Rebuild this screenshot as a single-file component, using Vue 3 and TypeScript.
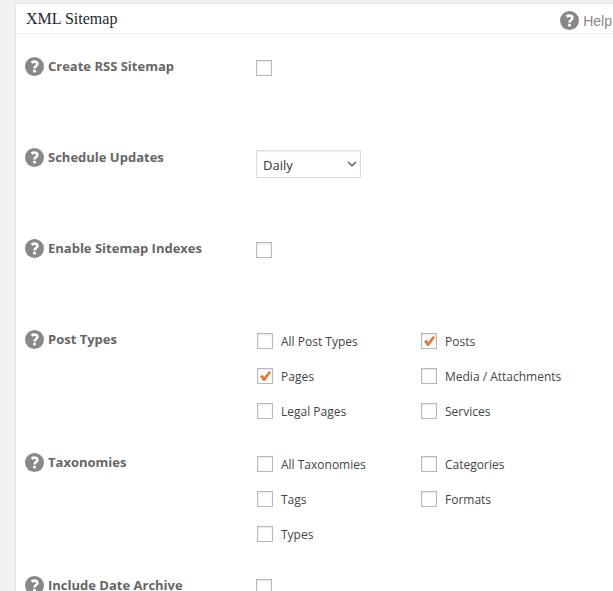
<script setup lang="ts">
import { ref } from 'vue'

interface Option {
  id: string
  label: string
  checked: boolean
}

interface Setting {
  id: string
  label: string
  kind: 'toggle' | 'select' | 'group'
  checked?: boolean
  value?: string
  choices?: string[]
  options?: Option[]
}

const option = (id: string, label: string, checked = false): Option => ({ id, label, checked })

const settings = ref<Setting[]>([
  { id: 'rss', label: 'Create RSS Sitemap', kind: 'toggle', checked: false },
  { id: 'schedule', label: 'Schedule Updates', kind: 'select', value: 'Daily', choices: ['Daily'] },
  { id: 'indexes', label: 'Enable Sitemap Indexes', kind: 'toggle', checked: false },
  {
    id: 'post-types',
    label: 'Post Types',
    kind: 'group',
    options: [
      option('pt-all', 'All Post Types'),
      option('pt-posts', 'Posts', true),
      option('pt-pages', 'Pages', true),
      option('pt-media', 'Media / Attachments'),
      option('pt-legal', 'Legal Pages'),
      option('pt-services', 'Services'),
    ],
  },
  {
    id: 'taxonomies',
    label: 'Taxonomies',
    kind: 'group',
    options: [
      option('tx-all', 'All Taxonomies'),
      option('tx-categories', 'Categories'),
      option('tx-tags', 'Tags'),
      option('tx-formats', 'Formats'),
      option('tx-types', 'Types'),
    ],
  },
  { id: 'date-archive', label: 'Include Date Archive', kind: 'toggle', checked: false },
])
</script>

<template>
  <main class="page">
    <section class="panel">
      <header class="panel-head">
        <h2 class="title">XML Sitemap</h2>
        <a class="help" href="#help">
          <svg class="mark" viewBox="0 0 19 19" aria-hidden="true">
            <circle cx="9.5" cy="9.5" r="9.5" />
            <path d="M6.5 5.6C8.2 4.4 12.4 3.9 12.4 6.9C12.4 9 9.5 9 9.5 11.4" />
            <rect x="8" y="12.7" width="3" height="2.7" rx="1" />
          </svg>
          <span>Help</span>
        </a>
      </header>

      <form class="settings" @submit.prevent>
        <div v-for="item in settings" :key="item.id" class="row">
          <div class="name">
            <button type="button" class="tip" :aria-describedby="`${item.id}-label`">
              <svg class="mark" viewBox="0 0 19 19" aria-hidden="true">
                <circle cx="9.5" cy="9.5" r="9.5" />
                <path d="M6.5 5.6C8.2 4.4 12.4 3.9 12.4 6.9C12.4 9 9.5 9 9.5 11.4" />
                <rect x="8" y="12.7" width="3" height="2.7" rx="1" />
              </svg>
            </button>
            <span v-if="item.kind === 'group'" :id="`${item.id}-label`" class="label">{{ item.label }}</span>
            <label v-else :id="`${item.id}-label`" class="label" :for="item.id">{{ item.label }}</label>
          </div>

          <div v-if="item.kind === 'toggle'" class="field">
            <span class="box">
              <input :id="item.id" v-model="item.checked" type="checkbox" />
              <svg v-if="item.checked" class="tick" viewBox="0 0 16 16" aria-hidden="true">
                <path d="M3 8.4L5.4 6.8L7.2 9L12 3L14.2 4.2L7.8 13H6.4Z" />
              </svg>
            </span>
          </div>

          <div v-else-if="item.kind === 'select'" class="field field-select">
            <span class="picker">
              <select :id="item.id" v-model="item.value">
                <option v-for="choice in item.choices" :key="choice">{{ choice }}</option>
              </select>
              <svg class="chevron" viewBox="0 0 10 6" aria-hidden="true">
                <path d="M1 1L5 4.6L9 1" />
              </svg>
            </span>
          </div>

          <div v-else class="options" role="group" :aria-labelledby="`${item.id}-label`">
            <label v-for="entry in item.options" :key="entry.id" class="option" :for="entry.id">
              <span class="box">
                <input :id="entry.id" v-model="entry.checked" type="checkbox" />
                <svg v-if="entry.checked" class="tick" viewBox="0 0 16 16" aria-hidden="true">
                  <path d="M3 8.4L5.4 6.8L7.2 9L12 3L14.2 4.2L7.8 13H6.4Z" />
                </svg>
              </span>
              <span>{{ entry.label }}</span>
            </label>
          </div>
        </div>
      </form>
    </section>
  </main>
</template>

<style>
body {
  background: #f1f1f1;
}
</style>

<style scoped>
.page {
  padding: 3px 0 0 15px;
  font-family: 'Open Sans', sans-serif;
  font-size: 12px;
  color: #444;
}

.panel {
  background: #fff;
  border: 1px solid #e5e5e5;
  border-right: 0;
}

.panel-head {
  display: flex;
  align-items: center;
  justify-content: space-between;
  height: 29px;
  padding: 0 1px 0 10px;
  border-bottom: 1px solid #eee;
}

.title {
  margin: 0;
  font: 400 16px/24px 'Liberation Serif', serif;
  color: #23282d;
}

.help {
  display: flex;
  align-items: center;
  gap: 4px;
  padding-top: 4px;
  font: 14px/20px 'Liberation Sans', sans-serif;
  color: #888;
  text-decoration: none;
}

.mark {
  display: block;
  width: 19px;
  height: 19px;
}

.mark circle {
  fill: #888;
}

.mark path {
  fill: none;
  stroke: #fff;
  stroke-width: 2.6;
}

.mark rect {
  fill: #fff;
}

.settings {
  padding: 23px 0 0 9px;
}

.row {
  display: grid;
  grid-template-columns: 231px 1fr;
  align-items: start;
  min-height: 91px;
}

.name {
  display: flex;
  align-items: center;
  gap: 4px;
}

.tip {
  padding: 0;
  border: 0;
  background: none;
  cursor: help;
}

.label {
  font-size: 13px;
  line-height: 19px;
  font-weight: 700;
  color: #666;
}

.field {
  padding-top: 3px;
}

.field-select {
  padding-top: 2px;
}

.box {
  display: block;
  position: relative;
  width: 16px;
  height: 16px;
}

.box input {
  appearance: none;
  display: block;
  box-sizing: border-box;
  width: 16px;
  height: 16px;
  margin: 0;
  border: 1px solid #b4b9be;
  background: #fff;
  box-shadow: inset 0 1px 2px rgba(0, 0, 0, 0.1);
}

.tick {
  position: absolute;
  inset: 0;
  pointer-events: none;
}

.tick path {
  fill: #e07b39;
}

.picker {
  display: block;
  position: relative;
  width: 105px;
}

.picker select {
  appearance: none;
  display: block;
  box-sizing: border-box;
  width: 100%;
  height: 28px;
  padding: 2px 20px 0 6px;
  border: 1px solid #ddd;
  border-radius: 0;
  background: #fff;
  box-shadow: inset 0 1px 2px rgba(0, 0, 0, 0.07);
  font: 13px 'Open Sans', sans-serif;
  color: #32373c;
}

.chevron {
  position: absolute;
  top: 11px;
  right: 4px;
  width: 10px;
  height: 6px;
  pointer-events: none;
}

.chevron path {
  fill: none;
  stroke: #666;
  stroke-width: 1.6;
}

.options {
  display: grid;
  grid-template-columns: 164px 1fr;
  grid-auto-rows: 35px;
  padding: 3px 0 15px 1px;
}

.option {
  display: flex;
  align-items: center;
  gap: 8px;
  height: 16px;
}
</style>
